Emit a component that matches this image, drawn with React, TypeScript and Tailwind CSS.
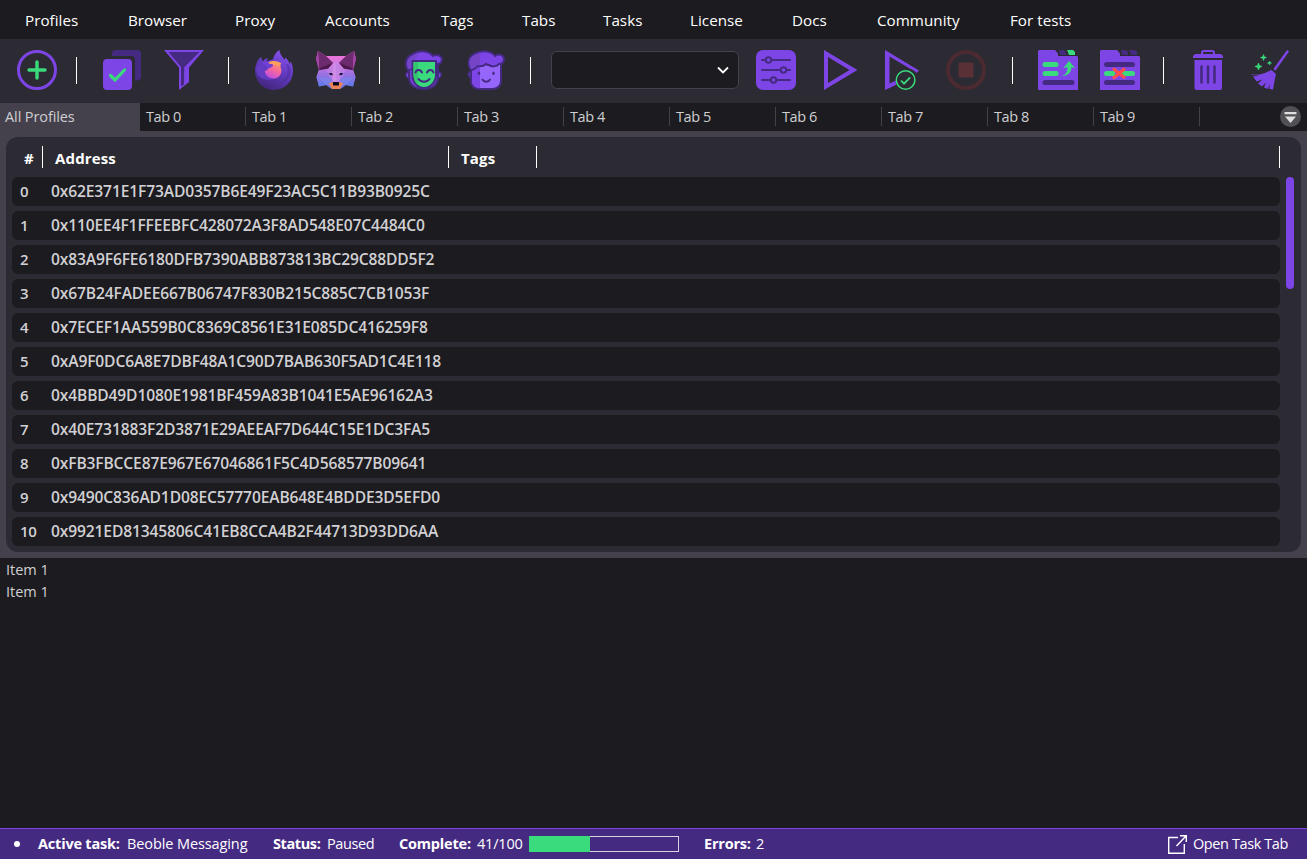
import React from "react";

const menu: [string, string][] = [
  ["Profiles", "w-[103px]"],
  ["Browser", "w-[107px]"],
  ["Proxy", "w-[90px]"],
  ["Accounts", "w-[116px]"],
  ["Tags", "w-[81px]"],
  ["Tabs", "w-[81px]"],
  ["Tasks", "w-[87px]"],
  ["License", "w-[102px]"],
  ["Docs", "w-[85px]"],
  ["Community", "w-[133px]"],
  ["For tests", "w-[80px]"],
];

const addresses = [
  "0x62E371E1F73AD0357B6E49F23AC5C11B93B0925C",
  "0x110EE4F1FFEEBFC428072A3F8AD548E07C4484C0",
  "0x83A9F6FE6180DFB7390ABB873813BC29C88DD5F2",
  "0x67B24FADEE667B06747F830B215C885C7CB1053F",
  "0x7ECEF1AA559B0C8369C8561E31E085DC416259F8",
  "0xA9F0DC6A8E7DBF48A1C90D7BAB630F5AD1C4E118",
  "0x4BBD49D1080E1981BF459A83B1041E5AE96162A3",
  "0x40E731883F2D3871E29AEEAF7D644C15E1DC3FA5",
  "0xFB3FBCCE87E967E67046861F5C4D568577B09641",
  "0x9490C836AD1D08EC57770EAB648E4BDDE3D5EFD0",
  "0x9921ED81345806C41EB8CCA4B2F44713D93DD6AA",
];

const tabs = Array.from({ length: 10 }, (_, i) => `Tab ${i}`);

function Icon({ className = "", children }: { className?: string; children: React.ReactNode }) {
  return (
    <button className={`h-10 w-10 shrink-0 ${className}`}>
      <svg width="40" height="40" viewBox="0 0 40 40" fill="none" className="block overflow-visible">
        {children}
      </svg>
    </button>
  );
}

function Divider({ className }: { className: string }) {
  return <div className={`h-[27px] w-px shrink-0 bg-white ${className}`} />;
}

function AddIcon() {
  return (
    <Icon className="ml-[17px]">
      <circle cx="20" cy="20" r="18.5" stroke="#7e45e6" strokeWidth="3" />
      <path d="M20 12v16M12 20h16" stroke="#3adb7c" strokeWidth="3.4" strokeLinecap="round" />
    </Icon>
  );
}

function SelectIcon() {
  return (
    <Icon className="ml-[25px]">
      <path d="M10 6V4a4 4 0 0 1 4-4h21a4 4 0 0 1 4 4v22.500a4 4 0 0 1-4 4h-2V10a4 4 0 0 0-4-4z" fill="#452a82" />
      <rect x="1" y="9" width="29" height="31" rx="4" fill="#7e45e6" />
      <path d="M8.500 25.500l4.500 4.500L22.500 20" stroke="#3adb7c" strokeWidth="3.200" strokeLinecap="round" />
    </Icon>
  );
}

function FilterIcon() {
  return (
    <Icon className="ml-[22px]">
      <path d="M0 0h40L25 17.500V32l-10 8V17.500z" fill="#7e45e6" />
      <path d="M4.500 2h31L20.500 17v17L17 36.500V17z" fill="#452a82" />
      <path d="M20.500 17l-.5 17.500 5-2.500V17.500z" fill="#7e45e6" />
    </Icon>
  );
}

function FirefoxIcon() {
  return (
    <Icon className="ml-[25px]">
      <defs>
        <linearGradient id="fx-body" x1="31" y1="2" x2="12" y2="38" gradientUnits="userSpaceOnUse">
          <stop stopColor="#8752eb" />
          <stop offset=".45" stopColor="#653bc4" />
          <stop offset="1" stopColor="#432780" />
        </linearGradient>
        <linearGradient id="fx-globe" x1="25" y1="11" x2="16" y2="29" gradientUnits="userSpaceOnUse">
          <stop stopColor="#ffa25a" />
          <stop offset=".5" stopColor="#f7689d" />
          <stop offset="1" stopColor="#b94ce5" />
        </linearGradient>
      </defs>
      <path
        d="M25.300 0C22 2 19.500 6 19 9.500c-2 0-4 .8-5.500 2-.4-1.200-.3-2.500 0-3.700-2 .8-3.500 2-4.500 3.500-1-.8-1.500-2.600-2-4.600C3.500 10 1.700 14 1 19c-.5 13 8.500 21 19 21s19-8.500 19-19c0-4-1-7.500-2.500-9.500l-.6 2.500C34 10 32.500 8 31 7.500V10c-2-2-5-5.500-5.700-10z"
        fill="url(#fx-body)"
      />
      <path d="M32 14c4 9 .5 18-11 20 14-.5 20-12 13-20z" fill="#4b2b98" opacity=".5" />
      <circle cx="19" cy="20.500" r="8.500" fill="url(#fx-globe)" />
      <path d="M14 13c3-3 10-2.500 13.500.5L26 14.500l1.500 1c-2 .5-4 0-6-.5z" fill="#ffa05b" />
      <path
        d="M2 19c1-4 3-8 8-7.500 3 .4 3.500 2.500 7.500 2.500l1.500 1c0 2-3.500 2.500-4.500 3.500-1.200 1.500-2.500 2.100-4 2.500 1 5 5 8 10 7.500C11 32 3 28 2 19z"
        fill="#643bc3"
      />
      <path d="M8 11.500c3-1.500 5 0 6 1.500 1 1 2.500 1 3.500 1l1.500 1c0 2-3.500 2.500-4.500 3.500-1.500-2.500-5-4-6.500-7z" fill="#7141d7" />
    </Icon>
  );
}

function FoxIcon() {
  return (
    <Icon className="ml-[22px]">
      <defs>
        <linearGradient id="fox-face" x1="20" y1="5" x2="20" y2="38" gradientUnits="userSpaceOnUse">
          <stop stopColor="#ee72d9" />
          <stop offset=".4" stopColor="#c57ee2" />
          <stop offset=".65" stopColor="#a47de7" />
          <stop offset="1" stopColor="#6172e3" />
        </linearGradient>
        <linearGradient id="fox-cheek" x1="0" y1="20" x2="0" y2="37" gradientUnits="userSpaceOnUse">
          <stop stopColor="#b070df" />
          <stop offset="1" stopColor="#5877e8" />
        </linearGradient>
      </defs>
      <path d="M2 1l8 5h20l8-5 2 8-3 11 2.500 7-2.500 9.500-7-1.500-4 3-2 1h-8l-2-1-4-3-7 1.500L.5 27 3 20 0 9z" fill="url(#fox-face)" />
      <path d="M3 20L.5 27 3 36.500l7-1.500 4.500-5-4-10zM37 20l2.500 7-2.500 9.500-7-1.500-4.500-5 4-10z" fill="url(#fox-cheek)" />
      <path d="M2 1l8 5 7 6.700-5 5.800L3 20 0 9zM38 1l-8 5-7 6.700 5 5.800L37 20l3-11z" fill="#6d2a6c" />
      <path d="M4 18L17 12.700l-5 6L3 20zM36 18l-13-5.300 5 6 9 1.300z" fill="#4d194f" />
      <path d="M2 1l1 8v11L0 9zM38 1l-1 8v11l3-11z" fill="#a446a8" />
      <path d="M17 12.700h6l1.500 14-1.500 6h-6l-1.500-6z" fill="#c583e5" />
      <path d="M17.500 12.700H20v19h-3l-.8-5z" fill="#d896ec" opacity=".5" />
      <path d="M3 28h10l2 4.500L10 35zM37 28H27l-2 4.500 5 2.500z" fill="#8193f5" opacity=".45" />
      <path d="M12.800 23h3.200l1 2.300-3-.3zM27.200 23H24l-1 2.300 3-.3z" fill="#26153f" />
      <path d="M12.800 33.500l4-1.500h6.400l4 1.500L24 39h-8z" fill="#ea8356" />
      <path d="M17 32h6v3.500h-6z" fill="#0b0a18" />
    </Icon>
  );
}

function MaskFaceIcon() {
  return (
    <Icon className="ml-[24px]">
      <path d="M5 14v13c0 8 6 12 15 12s14-5 14-12V12H7z" fill="#7443d1" stroke="#452a82" strokeWidth="2" />
      <path d="M4 22c-3 0-3 6 1 6zM35 22c3 0 3 6-1 6z" fill="#8659ed" stroke="#452a82" strokeWidth="1.500" />
      <path
        d="M4 20C0 13 2 7 9 4c5-4 15-4 20 2 3-2 8-1 9 3 0 4-2 5-5 5l-1 5H6z"
        fill="#7e45e6"
        stroke="#452a82"
        strokeWidth="2"
      />
      <path d="M4 19C2 12 4 7 10 5c3-2 5-2 5-2-3 4-2 5-8 8v8z" fill="#7545c7" />
      <path d="M8.500 11H32v14c0 7-6 13-12 13S8.500 32 8.500 25z" fill="#3adb7c" stroke="#452a82" strokeWidth="2" />
      <path d="M9.500 12H14v23c-3-2-4.500-6-4.500-10z" fill="#35c56e" />
      <path d="M11.500 22.500c1-3.500 5-3.500 6.500 0M23 22.500c1.500-3.500 5.500-3.500 6.500 0M14.500 29c2 3.500 9 3.500 11 0" stroke="#452a82" strokeWidth="2" strokeLinecap="round" />
    </Icon>
  );
}

function FaceIcon() {
  return (
    <Icon className="ml-[22px]">
      <path d="M5 22c-3-1-4 5 1 6" fill="#8659ed" stroke="#452a82" strokeWidth="2" />
      <path d="M5 14v17c0 5 4 8 9 8h12c5 0 9-3 9-8V12z" fill="#9666fa" stroke="#452a82" strokeWidth="2" />
      <path d="M6 17h8v21c-5 0-8-3-8-7z" fill="#7e45e6" />
      <path
        d="M5 20C1 15 2 7 8 4c6-4 17-4 21 2 3-3 9-1 9 3s-2 5-5 5c-2 3-8 3-10 1-2 0-3-1-3-1s-3 3-9 2c-1 3-6 4-6 4z"
        fill="#7e45e6"
        stroke="#452a82"
        strokeWidth="2"
      />
      <path d="M5 19C2 13 3 7 9 5c2-1 4-1 5-1v10l-3 1c-1 3-5 3-6 4z" fill="#7545c7" />
      <ellipse cx="13" cy="23.300" rx="1.200" ry="1.700" fill="#452a82" />
      <ellipse cx="27.500" cy="23.300" rx="1.200" ry="1.700" fill="#452a82" />
      <path d="M16.500 29.500c1.500 3 6 3 7.500 0" stroke="#452a82" strokeWidth="1.800" strokeLinecap="round" />
    </Icon>
  );
}

function SlidersIcon() {
  return (
    <Icon className="ml-[17px]">
      <rect width="40" height="40" rx="7" fill="#7e45e6" />
      <path d="M6 10h28M6 20h28M6 30h28" stroke="#452a82" strokeWidth="2" strokeLinecap="round" />
      <g fill="#7e45e6" stroke="#452a82" strokeWidth="2">
        <circle cx="12.500" cy="10" r="2.800" />
        <circle cx="27.500" cy="20" r="2.800" />
        <circle cx="17.500" cy="30" r="2.800" />
      </g>
    </Icon>
  );
}

function PlayIcon() {
  return (
    <Icon className="ml-[27px]">
      <path d="M1 0l33.500 20L1 40zM5 7v26l21.500-13z" fillRule="evenodd" fill="#7e45e6" />
    </Icon>
  );
}

function PlayCheckIcon() {
  return (
    <Icon className="ml-[22px]">
      <path d="M0 0l34 20.500-2.500 2.500c-1.500-2-3-3-6-4L4.500 6.500v27L11 30.500c-.5 2 0 3.500 0 4.500L0 40z" fill="#7e45e6" />
      <circle cx="20.600" cy="30" r="9.300" fill="#2c2a32" stroke="#3adb7c" strokeWidth="1.500" />
      <path d="M16 30.500l3 3.200 6.200-6.400" stroke="#3adb7c" strokeWidth="1.800" />
    </Icon>
  );
}

function StopIcon() {
  return (
    <Icon className="ml-[21px]">
      <circle cx="20" cy="20" r="18" stroke="#4c2a32" strokeWidth="4" />
      <rect x="12.500" y="12.500" width="15" height="15" rx="1" fill="#593036" />
    </Icon>
  );
}

function MoveTabIcon() {
  return (
    <Icon className="ml-[25px]">
      <path d="M1 0h16l3 3.500V6h19l1 1v33H0V1z" fill="#7e45e6" />
      <path d="M21 0h5l3 5h-7z" fill="#452a82" />
      <path d="M29 0h6l2 2v3h-6z" fill="#3adb7c" />
      <path d="M7 14.500h11M7 23.500h11" stroke="#3adb7c" strokeWidth="5" strokeLinecap="round" />
      <path d="M7 32.500h27" stroke="#452a82" strokeWidth="5" strokeLinecap="round" />
      <path d="M31 11l6 7-3.500-.8c0 5-4 9-9.500 8.800 4-1.500 5.500-4 5.500-8.800L25.500 18z" fill="#3adb7c" />
    </Icon>
  );
}

function CloseTabIcon() {
  return (
    <Icon className="ml-[22px]">
      <path d="M1 0h16l3 3.500V6h19l1 1v33H0V1z" fill="#7e45e6" />
      <path d="M21 0h5l2 2v3h-6zM29 0h6l2 2v3h-6z" fill="#452a82" />
      <path d="M6.500 14.500h26M6.500 32.500h26" stroke="#452a82" strokeWidth="5" strokeLinecap="round" />
      <path d="M6.500 23.500h26" stroke="#3adb7c" strokeWidth="5" strokeLinecap="round" />
      <path d="M18.500 18v11" stroke="#7e45e6" strokeWidth="7" />
      <path d="M13 18.500l12 9.500M25 18.500L13 28.500" stroke="#ff4b4b" strokeWidth="3.200" />
    </Icon>
  );
}

function TrashIcon() {
  return (
    <Icon className="ml-[24px]">
      <path d="M14 4V3a2 2 0 0 1 2-2h8a2 2 0 0 1 2 2v1" stroke="#7e45e6" strokeWidth="2" />
      <path d="M7 4h26l2 2v2H5V6z" fill="#7e45e6" />
      <path d="M6.500 10H34v28a2 2 0 0 1-2 2H8.500a2 2 0 0 1-2-2z" fill="#7e45e6" />
      <path d="M13.500 16.500v16M20 16.500v16M26.500 16.500v16" stroke="#452a82" strokeWidth="2.600" strokeLinecap="round" />
    </Icon>
  );
}

function BroomIcon() {
  return (
    <Icon className="ml-[23px]">
      <path d="M36.500 1.500L24 19" stroke="#7e45e6" strokeWidth="2.600" strokeLinecap="round" />
      <path
        d="M20.500 20l4.500 4-1.500 7-1.500 8.500-3.500-.5v-5l-1.500 5-4-1.500 2-5-4 4-4-3 4.500-4-6 2-3.500-5 6-1-6.500-.5L0 24c6 2 13-.5 17-2.500z"
        fill="#7e45e6"
      />
      <path
        d="M12.500 4.500l.8 2.200 2.200.8-2.200.8-.8 2.200-.8-2.200-2.200-.8 2.200-.8zM18.500 11l.5 1.500 1.500.5-1.500.5-.5 1.500-.5-1.500-1.500-.5 1.500-.5zM7.500 13l1 2.500 2.500 1-2.500 1-1 2.500-1-2.500-2.500-1 2.500-1z"
        fill="#3adb7c"
        stroke="#3adb7c"
        strokeWidth=".6"
      />
    </Icon>
  );
}

export default function App() {
  return (
    <div className="flex h-[859px] w-[1307px] flex-col overflow-hidden bg-[#1c1b20] font-['Open_Sans','Noto_Sans',sans-serif] text-[14.5px] leading-5 tracking-[-0.2px] whitespace-nowrap">
      <nav className="flex h-[39px] shrink-0 items-center pt-px pl-[25px] text-[15.200px] tracking-[0.03px] text-white">
        {menu.map(([label, width]) => (
          <button key={label} className={`shrink-0 text-left ${width}`}>
            {label}
          </button>
        ))}
      </nav>

      <div className="flex h-16 shrink-0 items-center bg-[#2c2a32] pb-[2px]">
        <AddIcon />
        <Divider className="ml-[19px]" />
        <SelectIcon />
        <FilterIcon />
        <Divider className="ml-[24px]" />
        <FirefoxIcon />
        <FoxIcon />
        <Divider className="ml-[23px]" />
        <MaskFaceIcon />
        <FaceIcon />
        <Divider className="ml-[24px]" />
        <button className="ml-[20px] flex h-[38px] w-[188px] shrink-0 items-center justify-end rounded-[6px] border border-[#44414d] bg-[#1c1b20] pr-[9px]">
          <svg width="12" height="8" viewBox="0 0 12 8" fill="none">
            <path d="M1 1.500l5 5 5-5" stroke="#fff" strokeWidth="1.800" />
          </svg>
        </button>
        <SlidersIcon />
        <PlayIcon />
        <PlayCheckIcon />
        <StopIcon />
        <Divider className="ml-[26px]" />
        <MoveTabIcon />
        <CloseTabIcon />
        <Divider className="ml-[23px]" />
        <TrashIcon />
        <BroomIcon />
      </div>

      <div className="flex h-7 shrink-0 items-center text-[#cfcfd1]">
        <button className="h-7 w-[140px] bg-[#44414d] pl-[5px] text-left tracking-[-0.1px]">All Profiles</button>
        {tabs.map((tab) => (
          <button key={tab} className="flex h-7 w-[106px] items-center justify-between pl-[6px] tracking-[-0.4px]">
            {tab}
            <span className="mb-px h-[19px] w-px bg-[#44414d]" />
          </button>
        ))}
        <button className="mb-px ml-[80px]">
          <svg width="21" height="21" viewBox="0 0 21 21" className="block">
            <circle cx="10.500" cy="10.500" r="10.500" fill="#515055" />
            <path d="M4.500 6h12v2.300h-12zM5 10.500h11l-5.500 6.500z" fill="#dedede" />
          </svg>
        </button>
      </div>

      <main className="h-[427px] shrink-0 bg-[#44414d] p-[6px]">
        <section className="flex h-[415px] flex-col rounded-[12px] bg-[#2c2a32] pl-[6px]">
          <div className="flex h-10 shrink-0 items-center pt-[2px] text-[15px] font-bold tracking-[0.15px] text-white">
            <div className="w-[30px] pl-[12px]">#</div>
            <div className="mb-[2px] h-[22px] w-px bg-white" />
            <div className="w-[405px] pb-px pl-[12px]">Address</div>
            <div className="mb-[2px] h-[22px] w-px bg-white" />
            <div className="w-[87px] pb-px pl-[12px]">Tags</div>
            <div className="mb-[2px] h-[22px] w-px bg-white" />
            <div className="mb-[2px] ml-[742px] h-[22px] w-px bg-white" />
          </div>
          <div className="flex gap-[6px]">
            <div className="flex w-[1268px] flex-col gap-[5px]">
              {addresses.map((address, i) => (
                <div key={address} className="flex h-[29px] items-center rounded-[6px] bg-[#1c1b20] pb-[2px] pl-[8px] text-[15.600px] font-semibold tracking-[-0.14px] text-[#d1d0d3]">
                  <span className="w-[31px] text-[15px] tracking-[-0.4px]">{i}</span>
                  <span>{address}</span>
                </div>
              ))}
            </div>
            <div className="h-[112px] w-2 rounded-full bg-[#7e45e6]" />
          </div>
        </section>
      </main>

      <div className="flex h-[270px] shrink-0 flex-col pt-px pl-[6px] leading-[22px] tracking-normal text-[#d1d0d3]">
        <div>Item 1</div>
        <div>Item 1</div>
      </div>

      <footer className="flex h-[31px] shrink-0 items-center border-t border-[#7e45e6] bg-[#452a82] text-white">
        <div className="ml-[14px] h-[6px] w-[6px] rounded-full bg-white" />
        <div className="ml-[18px] w-[89px] font-bold">Active task:</div>
        <div className="w-[146px] tracking-[-0.1px]">Beoble Messaging</div>
        <div className="w-[54px] font-bold tracking-[-0.4px]">Status:</div>
        <div className="w-[72px] tracking-[-0.4px]">Paused</div>
        <div className="w-[78px] font-bold">Complete:</div>
        <div className="w-[52px]">41/100</div>
        <div className="h-4 w-[150px] border border-[#d9d4e2]">
          <div className="-mt-px -ml-px h-4 w-[61px] bg-[#3adb7c]" />
        </div>
        <div className="ml-[25px] w-[52px] font-bold">Errors:</div>
        <div>2</div>
        <button className="mr-[19px] ml-auto flex items-center gap-[6px]">
          <svg width="19" height="19" viewBox="0 0 19 19" fill="none" stroke="#fff" strokeWidth="1.400">
            <path d="M10 2.500H.700v15.800h15.600V9M8.500 11L18 1M12 .700h6.300V7" />
          </svg>
          <span className="tracking-[-0.4px]">Open Task Tab</span>
        </button>
      </footer>
    </div>
  );
}
